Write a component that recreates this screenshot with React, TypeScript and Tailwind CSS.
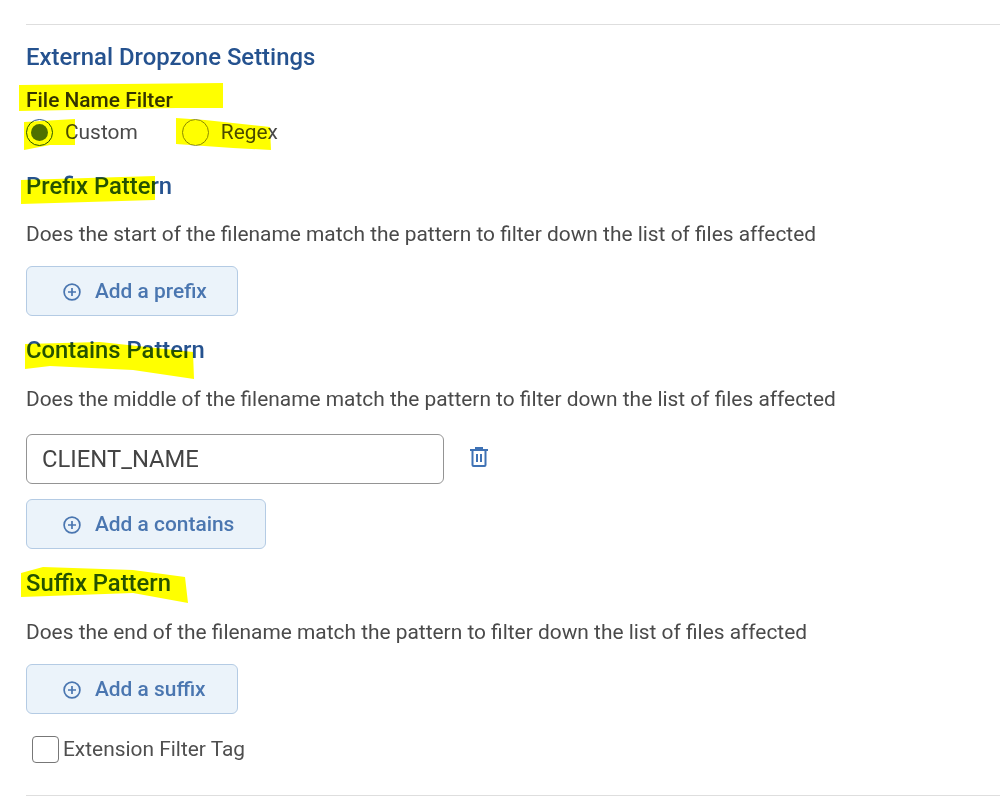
const highlights = [
  "19,85 223,83 223,108 176,108 19,111",
  "24,122 75,119 75,145 50,145 24,150",
  "176,118 205,120 270,127 271,150 233,148 176,144",
  "21,180 155,176 155,200 21,204",
  "25,344 100,342 193,352 194,379 133,370 50,366 25,369",
  "21,573 43,567 133,570 185,577 188,603 133,593 21,597",
];

function PlusIcon() {
  return (
    <svg width="18" height="18" viewBox="0 0 18 18" fill="none" stroke="currentColor" strokeWidth="1.7" className="mr-[14px]">
      <circle cx="9" cy="9" r="7.9" />
      <path d="M9 5v8M5 9h8" />
    </svg>
  );
}

function TrashIcon() {
  return (
    <svg width="18" height="20" viewBox="0 0 18 20" fill="none" stroke="currentColor" strokeWidth="2" className="ml-[26px] -translate-y-[2px] text-[#3f72b5]">
      <path d="M0 3h18M6 3V1h6v2" />
      <path d="M2.5 3v15a1 1 0 0 0 1 1h11a1 1 0 0 0 1-1V3" />
      <path d="M7 7v8M11 7v8" />
    </svg>
  );
}

function AddButton({ label, width }: { label: string; width: string }) {
  return (
    <button
      className={`flex h-[50px] items-center rounded-[6px] border border-[#b4cbe4] bg-[#ebf3fa] pt-[2px] pl-[36px] text-[20.9px] font-medium text-[#4a76b0] ${width}`}
    >
      <PlusIcon />
      {label}
    </button>
  );
}

function Section({ title, hint, gap }: { title: string; hint: string; gap: string }) {
  return (
    <>
      <h3 className="text-[23.8px] leading-[30px] font-medium text-[#25528f]">{title}</h3>
      <p className={`text-[20.9px] leading-[28px] text-[#4a4a4a] ${gap}`}>{hint}</p>
    </>
  );
}

export default function App() {
  return (
    <div className="relative h-[807px] w-[1000px] overflow-hidden bg-white font-['Roboto',sans-serif]">
      <div className="pt-[24px] pl-[26px]">
        <div className="border-t border-[#dedede]" />
        <h2 className="mt-[16px] text-[23.9px] leading-[32px] font-medium text-[#25528f]">External Dropzone Settings</h2>

        <div className="mt-[13px] text-[20.9px] leading-[28px] font-medium text-[#333]">File Name Filter</div>
        <div className="mt-[4px] flex h-[28px] items-center text-[20.9px] text-[#4a4a4a]">
          <span className="flex h-[27px] w-[27px] items-center justify-center rounded-full border border-[#25528f]">
            <span className="h-[17px] w-[17px] rounded-full bg-[#4f7000]" />
          </span>
          <span className="mt-[2px] ml-[12px]">Custom</span>
          <span className="ml-[44px] h-[27px] w-[27px] rounded-full border border-[#8a8a8a]" />
          <span className="mt-[2px] ml-[12px]">Regex</span>
        </div>

        <div className="mt-[25px]">
          <Section
            title="Prefix Pattern"
            gap="mt-[19px]"
            hint="Does the start of the filename match the pattern to filter down the list of files affected"
          />
        </div>
        <div className="mt-[18px]">
          <AddButton label="Add a prefix" width="w-[212px]" />
        </div>

        <div className="mt-[19px]">
          <Section
            title="Contains Pattern"
            gap="mt-[20px]"
            hint="Does the middle of the filename match the pattern to filter down the list of files affected"
          />
        </div>
        <div className="mt-[21px] flex items-center">
          <div className="flex h-[50px] w-[418px] items-center rounded-[6px] border border-[#949494] pt-[2px] pl-[15px] text-[23.8px] text-[#444]">
            CLIENT_NAME
          </div>
          <TrashIcon />
        </div>
        <div className="mt-[15px]">
          <AddButton label="Add a contains" width="w-[240px]" />
        </div>

        <div className="mt-[19px]">
          <Section
            title="Suffix Pattern"
            gap="mt-[20px]"
            hint="Does the end of the filename match the pattern to filter down the list of files affected"
          />
        </div>
        <div className="mt-[18px]">
          <AddButton label="Add a suffix" width="w-[212px]" />
        </div>

        <div className="mt-[21px] flex h-[28px] items-center pl-[6px] text-[20.9px] text-[#4f4f4f]">
          <span className="h-[27px] w-[27px] rounded-[4px] border border-[#777]" />
          <span className="mt-[2px] ml-[4px]">Extension Filter Tag</span>
        </div>

        <div className="mt-[32px] border-t border-[#dedede]" />
      </div>

      {/* marker strokes drawn over the page */}
      <svg className="absolute top-0 left-0 mix-blend-multiply" width="1000" height="807">
        {highlights.map((points) => (
          <polygon key={points} points={points} fill="#ffff00" />
        ))}
      </svg>
    </div>
  );
}
